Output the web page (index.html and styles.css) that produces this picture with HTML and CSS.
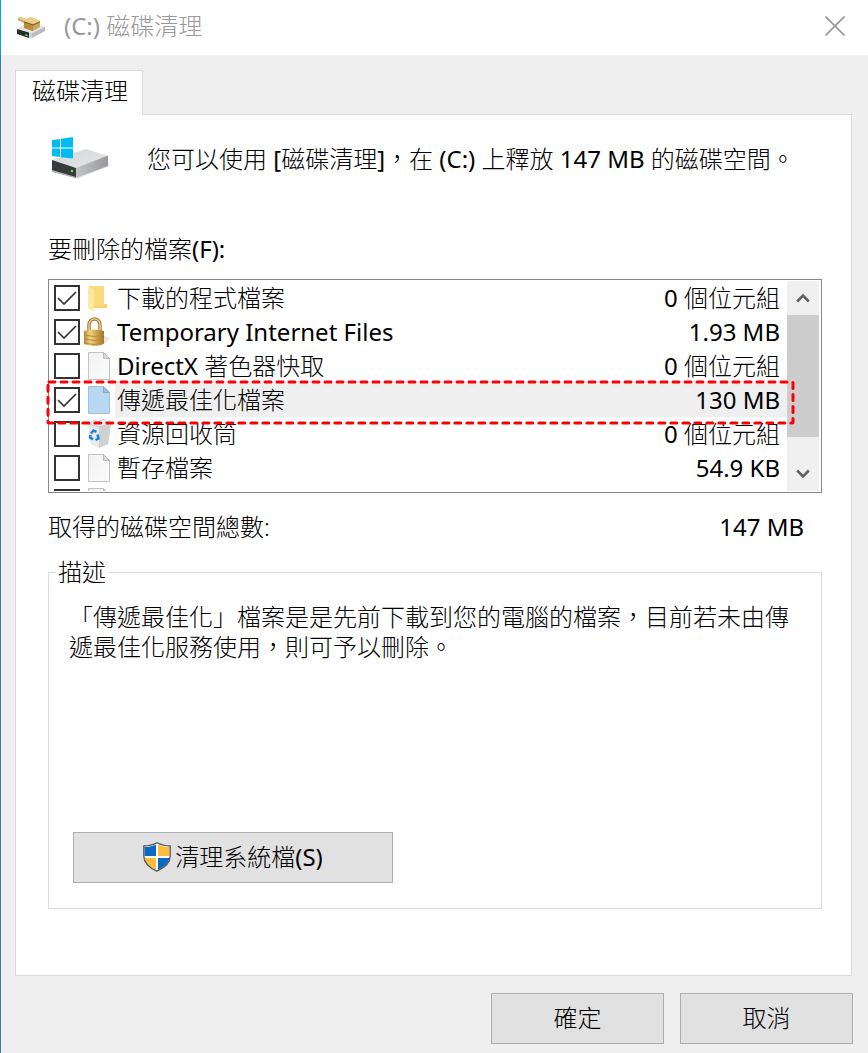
FILE: index.html
```html
<!DOCTYPE html>
<html lang="zh-Hant">
<head>
<meta charset="utf-8">
<meta name="viewport" content="width=device-width, initial-scale=1">
<title>(C:) 磁碟清理</title>
<link rel="stylesheet" href="styles.css">
</head>
<body>
<svg class="defs" aria-hidden="true">
  <defs>
    <linearGradient id="paper" x1="0" y1="0" x2="1" y2="1"><stop offset="0" stop-color="#f1f1f1"/><stop offset="1" stop-color="#fcfcfc"/></linearGradient>
    <linearGradient id="drive-top" x1="0" y1="0" x2="1" y2="1"><stop offset="0" stop-color="#d3d5d8"/><stop offset="1" stop-color="#e6e7e9"/></linearGradient>
    <linearGradient id="drive-side" x1="0" y1="0" x2="1" y2="0"><stop offset="0" stop-color="#c2c4c8"/><stop offset="1" stop-color="#96989c"/></linearGradient>
    <linearGradient id="gold" x1="0" y1="0" x2="1" y2="0"><stop offset="0" stop-color="#b5852e"/><stop offset=".3" stop-color="#efd584"/><stop offset=".65" stop-color="#cda04a"/><stop offset="1" stop-color="#9c7428"/></linearGradient>
    <symbol id="file" viewBox="0 0 24 30"><path d="M.5 1.500h15l6 6v21H.5z" fill="url(#paper)" stroke="#c3c3c3"/><path d="M15.500 1.500v6h6z" fill="#dadada" stroke="#b9b9b9"/></symbol>
  </defs>
</svg>
<div class="dialog">
  <header class="titlebar">
    <svg class="app-icon" viewBox="0 0 30 24" aria-hidden="true">
      <path d="M1 15 11 9l18 4-13 6z" fill="#e2e3e5"/>
      <path d="M16 19 29 13v4l-13 7z" fill="#b9bbbe"/>
      <path d="M1 15l12 3.500V24L1 20z" fill="#2b2d2d"/><path d="M13 18.500l3 .5v5h-3z" fill="#d0d1d3"/>
      <path d="M9 20l3 1v1.500l-3-1z" fill="#36cf45"/>
      <path d="M2 4l3-1 5 2 5-2 9 4v6l-7 4-9-3V9L2 6z" fill="#c9a657"/>
      <path d="M2 4l3-1 5 2 5-2 9 4-7 3-9-3z" fill="#e6cf8d"/>
      <path d="M8 8l9 3v6l-9-3z" fill="#b88d3a"/>
      <path d="M8 8l9 3 7-3" fill="none" stroke="#7f5d20"/>
    </svg>
    <h1 class="title"><span class="latin">(C:)</span> 磁碟清理</h1>
    <button class="close" type="button" aria-label="關閉"><svg viewBox="0 0 20 20"><path d="M.5.5l19 19m0-19l-19 19" fill="none" stroke="#999" stroke-width="1.700"/></svg></button>
  </header>
  <main class="content">
    <div class="tabs" role="tablist"><button class="tab" type="button" role="tab" aria-selected="true">磁碟清理</button></div>
    <section class="panel" role="tabpanel">
      <div class="intro">
        <svg class="drive" viewBox="0 0 60 42" aria-hidden="true">
          <path d="M56 27l4 1-34 14-5-1z" fill="#ececec"/>
          <path d="M0 23 34 12 56 19 24 32z" fill="url(#drive-top)"/>
          <path d="M24 31 56 18.500V29L24 41z" fill="url(#drive-side)"/>
          <path d="M0 23l24 8v10L0 34z" fill="#383a3c"/>
          <path d="M0 33l24 7v1L0 35z" fill="#b2b4b6"/>
          <circle cx="20" cy="34" r="1.300" fill="#3df03c"/>
          <path d="M0 3.200 8 2v8.500H0zM9 1.800 21 0v10.500H9zM0 11.500h8V20l-8-1zM9 11.500h12v10L9 20.200z" fill="#00bcf2"/>
        </svg>
        <p class="message">您可以使用 <span class="latin">[</span>磁碟清理<span class="latin">]</span>，在 <span class="latin">(C:)</span> 上釋放 <span class="latin">147 MB</span> 的磁碟空間。</p>
      </div>
      <h2 class="list-title" id="files-label">要刪除的檔案<span class="latin">(F):</span></h2>
      <div class="file-list" role="group" aria-labelledby="files-label">
        <ul class="rows">
          <li><label class="row"><input class="check" type="checkbox" checked>
            <svg class="icon" viewBox="0 0 24 30"><path d="M1 3h15v18h3v4H6z" fill="#fadb7d"/><path d="M16 21h3v4H6v-2h10z" fill="#f6d06c"/><path d="M0 3l6 4v22l-6-4z" fill="#ffe9a2"/></svg>
            <span class="name">下載的程式檔案</span><span class="size"><span class="latin">0</span> 個位元組</span></label></li>
          <li><label class="row"><input class="check" type="checkbox" checked>
            <svg class="icon" viewBox="0 0 24 30"><path d="M1 15V8C1 0 12 0 12 8v7" fill="none" stroke="#a6803b" stroke-width="3.500"/><path d="M1 15V8C1 0 12 0 12 8v7" fill="none" stroke="#e6cd88" stroke-width="1.500"/><path d="M16 18l6 4-6 5z" fill="#e9e6df"/><path d="M-4 14q10-3 20 0v13q-10 4-20 0z" fill="url(#gold)"/><path d="M-4 18q10 3 20 0M-4 22q10 3 20 0M-4 26q10 3 20 0" fill="none" stroke="#b58c3a"/></svg>
            <span class="name latin">Temporary Internet Files</span><span class="size latin">1.93 MB</span></label></li>
          <li><label class="row"><input class="check" type="checkbox">
            <svg class="icon" viewBox="0 0 24 30"><use href="#file"/></svg>
            <span class="name"><span class="latin">DirectX</span> 著色器快取</span><span class="size"><span class="latin">0</span> 個位元組</span></label></li>
          <li><label class="row selected"><input class="check" type="checkbox" checked>
            <svg class="icon" viewBox="0 0 24 30"><path d="M.5 1.500h15l6 6v21H.5z" fill="#b8d8f1" stroke="#9bc2e1"/><path d="M15.500 1.500v6h6z" fill="#9bc2e1" stroke="#82abcb"/></svg>
            <span class="name">傳遞最佳化檔案</span><span class="size latin">130 MB</span></label></li>
          <li><label class="row"><input class="check" type="checkbox">
            <svg class="icon" viewBox="0 0 24 30"><path d="M0 5 11 2l12 3-3 20-9 4-8-4z" fill="#dedfe1"/><path d="M0 5l11 3v21l-8-4z" fill="#e9eaec"/><path d="M11 8l12-3-3 20-9 4z" fill="#cfd1d3"/><path d="M1 5l5-4 4 2 5-3 6 5-10 3z" fill="#f6f6f6" stroke="#c6c7c9"/><path d="M3 14.500l2.500-3 3 1.500M9.500 15.500l1 4-3 1.500M5 20.500l-3-2 .5-2.500" fill="none" stroke="#1684d9" stroke-width="2.500"/></svg>
            <span class="name">資源回收筒</span><span class="size"><span class="latin">0</span> 個位元組</span></label></li>
          <li><label class="row"><input class="check" type="checkbox">
            <svg class="icon" viewBox="0 0 24 30"><use href="#file"/></svg>
            <span class="name">暫存檔案</span><span class="size latin">54.9 KB</span></label></li>
          <li><label class="row"><input class="check" type="checkbox">
            <svg class="icon" viewBox="0 0 24 30"><use href="#file"/></svg><span class="name"></span></label></li>
        </ul>
        <div class="scrollbar">
          <button class="arrow" type="button" aria-label="向上"><svg viewBox="0 0 12 10"><path d="M1 8l5-5 5 5" fill="none" stroke="#606060" stroke-width="2.200"/></svg></button>
          <div class="thumb"></div>
          <button class="arrow" type="button" aria-label="向下"><svg viewBox="0 0 12 10"><path d="M1 2l5 5 5-5" fill="none" stroke="#606060" stroke-width="2.200"/></svg></button>
        </div>
        <svg class="highlight" aria-hidden="true"><rect class="highlight-line" x="2" y="2" rx="1"/></svg>
      </div>
      <div class="total"><span>取得的磁碟空間總數:</span><span class="latin">147 MB</span></div>
      <fieldset class="description">
        <legend>描述</legend>
        <p class="description-text">「傳遞最佳化」檔案是是先前下載到您的電腦的檔案，目前若未由傳遞最佳化服務使用，則可予以刪除。</p>
        <button class="button system" type="button">
          <svg class="shield" viewBox="0 0 28 30" aria-hidden="true"><path d="M14 .8C10 3 5 4 .8 4v10c0 7 6 12 13.200 15.200C21 26 27.200 21 27.200 14V4C23 4 18 3 14 .8z" fill="#fff"/><path d="M13 2.500C9 4.500 5 5 1.500 5v9H13z" fill="#0b68c4"/><path d="M15 2.500C19 4.500 23 5 26.500 5v9H15z" fill="#fdbc3d"/><path d="M1.600 16H13v12C7 25 2 21 1.600 16z" fill="#fdbc3d"/><path d="M15 16h11.400C26 21 21 25 15 28z" fill="#0b68c4"/><path d="M14 .8C10 3 5 4 .8 4v10c0 7 6 12 13.200 15.200C21 26 27.200 21 27.200 14V4C23 4 18 3 14 .8z" fill="none" stroke="#555" stroke-width="1.300"/></svg>
          <span>清理系統檔<span class="latin">(S)</span></span>
        </button>
      </fieldset>
    </section>
    <footer class="actions"><button class="button" type="button">確定</button><button class="button" type="button">取消</button></footer>
  </main>
</div>
</body>
</html>
```
FILE: styles.css
```css
* { box-sizing: border-box; }
body, h1, h2, p, ul { margin: 0; padding: 0; }
body, button {
  font-family: "Noto Sans", "Noto Sans CJK TC", sans-serif;
  font-size: 24px;
  font-weight: 300;
  line-height: 30px;
  color: #000;
}
button { margin: 0; padding: 0; }
h1, h2 { font-size: 24px; font-weight: 300; }
.latin { font-weight: 400; }
.defs { position: absolute; width: 0; height: 0; }
.dialog {
  display: flex;
  flex-direction: column;
  min-height: 100vh;
  border-left: 1px solid #2c82ad;
  background: #efefef;
}
.titlebar {
  display: flex;
  align-items: center;
  height: 55px;
  margin-left: -1px;
  padding: 0 23px 4px 15px;
  border-left: 1px solid #00a8f3;
  background: #fff;
}
.app-icon { width: 30px; height: 24px; }
.title { flex: 1; margin-left: 18px; color: #999; }
.close { display: flex; border: 0; background: none; }
.close svg { width: 20px; height: 20px; }
.content { flex: 1; display: flex; flex-direction: column; padding: 15px 15px 9px 14px; }
.tabs { display: flex; }
.tab {
  z-index: 1;
  height: 45px;
  margin-bottom: -1px;
  padding: 0 14px 4px 16px;
  border: 1px solid #d9d9d9;
  border-bottom: 0;
  background: #fff;
}
.panel {
  flex: 1;
  margin-right: 1px;
  padding: 22px 29px 66px 32px;
  border: 1px solid #d9d9d9;
  background: #fff;
}
.intro { display: flex; align-items: center; gap: 35px; margin-left: 4px; }
.drive { width: 60px; height: 42px; flex: none; }
.message { padding-top: 2px; }
.list-title { margin: 55px 0 15px; }
.file-list {
  position: relative;
  display: flex;
  height: 214px;
  padding: 1px 2px 1px 1px;
  border: 1px solid #828790;
}
.rows { flex: 1; overflow: hidden; list-style: none; }
.row { display: flex; align-items: center; height: 34px; padding-left: 4px; }
.check {
  appearance: none;
  flex: none;
  width: 26px;
  height: 26px;
  margin: 0 8px 0 0;
  border: 2px solid #333;
  background: #fff;
}
.check:checked {
  background: #fff url("data:image/svg+xml,%3Csvg xmlns='http://www.w3.org/2000/svg' viewBox='0 0 22 22'%3E%3Cpath d='M2 11l6 6L20 5' fill='none' stroke='%23333' stroke-width='1.6'/%3E%3C/svg%3E") center / 22px 22px no-repeat;
}
.icon { flex: none; width: 24px; height: 30px; overflow: visible; }
.name { flex: 1; padding-left: 5px; line-height: 34px; }
.name:empty { height: 34px; }
.size { padding-right: 7px; line-height: 34px; }
.selected .name, .selected .size { background: #efefef; }
.selected .name { margin-left: 3px; padding-left: 2px; }
.scrollbar { display: flex; flex-direction: column; width: 32px; background: #f0f0f0; }
.arrow { display: flex; align-items: center; justify-content: center; height: 34px; border: 0; background: none; }
.arrow svg { width: 14px; height: 12px; }
.thumb { height: 122px; margin-bottom: auto; background: #cdcdcd; }
.highlight { position: absolute; top: 100px; left: -3px; width: calc(100% - 23px); height: 45px; pointer-events: none; }
.highlight-line { width: calc(100% - 4px); height: 41px; fill: none; stroke: #fb0007; stroke-width: 3; stroke-linecap: round; stroke-dasharray: 6 6; }
.total { display: flex; justify-content: space-between; padding: 19px 18px 0 0; }
.description { min-height: 352px; margin: 15px 0 0; padding: 15px 20px 24px; border: 1px solid #dcdcdc; }
.description legend { margin-left: -13px; padding: 0 3px 0 2px; }
.description-text { min-height: 230px; }
.button { display: flex; align-items: center; justify-content: center; height: 51px; padding-bottom: 2px; border: 1px solid #adadad; background: #e1e1e1; }
.system { width: 320px; margin-left: 4px; gap: 4px; }
.shield { width: 28px; height: 30px; }
.actions { display: flex; justify-content: flex-end; gap: 16px; padding-top: 17px; }
.actions .button { width: 173px; }
```
